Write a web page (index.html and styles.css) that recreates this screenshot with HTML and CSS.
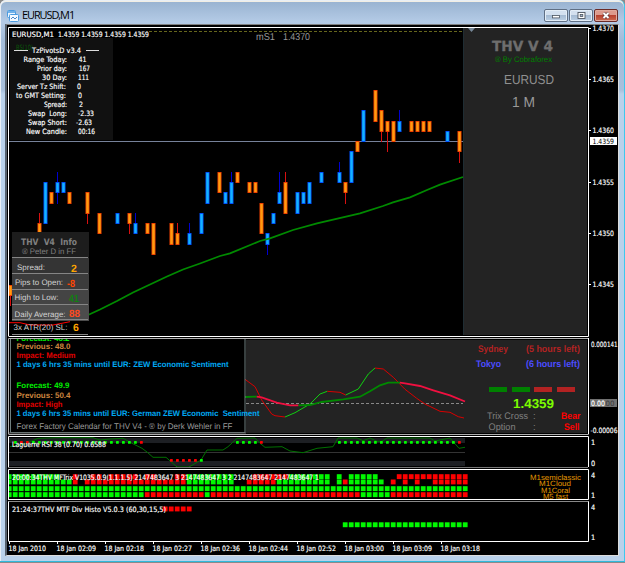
FILE: index.html
```html
<!DOCTYPE html>
<html lang="en">
<head>
  <meta charset="UTF-8">
  <title>EURUSD,M1</title>
  <link rel="stylesheet" href="styles.css">
</head>
<body>

<div class="window">
  <!-- TITLE BAR -->
  <div class="titlebar">
    <svg class="app-icon" width="12" height="12" viewBox="0 0 12 12">
      <rect x="0.5" y="0.5" width="8" height="7" rx="1" fill="#e8f4ff" stroke="#4a9be0"/>
      <path d="M1 2h7" stroke="#4a9be0" stroke-width="1.5"/>
      <rect x="2.5" y="4.5" width="9" height="7" rx="1" fill="#f4faff" stroke="#4a9be0"/>
      <path d="M4 9l2-2 2 2 2-2" fill="none" stroke="#4a86c8"/>
    </svg>
    <span class="title">EURUSD,M1</span>
    <div class="buttons">
      <button class="win-btn"><svg width="22" height="11" viewBox="0 0 22 11"><rect x="7.5" y="5.5" width="7" height="2.4" fill="#fff" stroke="#4d5560" stroke-width=".8"/></svg></button>
      <button class="win-btn"><svg width="22" height="11" viewBox="0 0 22 11"><rect x="8" y="2.5" width="7" height="6" fill="#fff" stroke="#4d5560" stroke-width=".9"/><rect x="10.2" y="4.5" width="2.6" height="2" fill="#9fb4cc" stroke="#4d5560" stroke-width=".8"/></svg></button>
      <button class="win-btn close"><svg width="22" height="11" viewBox="0 0 22 11"><path d="M8.5 3l5 5M13.5 3l-5 5" stroke="#5a3030" stroke-width="3.2"/><path d="M8.5 3l5 5M13.5 3l-5 5" stroke="#fff" stroke-width="2"/></svg></button>
    </div>
  </div>

  <div class="charts">
    <!-- PRICE CHART -->
    <svg class="panel" width="611" height="312" viewBox="7 25 611 312">
      <rect x="463" y="28" width="124" height="307" fill="#232323"/>
      <path d="M463.5 28V335" stroke="#1f2d33"/>
      <path d="M149 31.5H463" stroke="#66661c" stroke-dasharray="3 2"/>
      <path d="M9 141.5H463" stroke="#76829a"/>
      <path d="M468 28h7l-3.5 4z" fill="#778899"/>
      <g id="candles"></g>
      <polyline class="ma" points="88,315 100,309.5 117,301 133,292.5 150,284.5 167,276.5 183,269.5 200,263.5 220,256 230,253.3 260,241 270,238.3 293,230 317,223.3 360,213.3 383,206 393,202.3 410,197.3 427,190 440,184.7 463,177"/>
      <path d="M8.5 336V27.5H588.5V336.5H8.5" fill="none" stroke="#fff"/>

      <!-- pivots box -->
      <rect x="10" y="38" width="103" height="102" fill="#111"/>
      <text class="tahoma green-dim" x="16" y="49.5" textLength="17">BS(10)</text>
      <text class="tahoma" x="12" y="36.5" textLength="42">EURUSD,M1</text>
      <text class="tahoma" x="58" y="36.5" textLength="91">1.4359 1.4359 1.4359 1.4359</text>
      <path d="M14 50.5H28M86 50.5H99" stroke="#ddd"/>
      <text class="tahoma" x="32" y="53" textLength="49">TzPivotsD v3.4</text>
      <g id="pivots"></g>

      <!-- info box -->
      <path d="M9 322.7H20L30 325H53L70 321.7" fill="none" stroke="#f00"/>
      <rect x="12" y="232" width="77" height="26" fill="#1d1d1d"/>
      <rect x="12" y="258" width="77" height="16" fill="#343434"/>
      <rect x="12" y="274" width="77" height="16" fill="#3c3c3c"/>
      <rect x="12" y="290" width="77" height="15" fill="#444"/>
      <rect x="12" y="305" width="77" height="16" fill="#4c4c4c"/>
      <path d="M12 257.5H88M12 273.5H88M12 289.5H88M12 304.5H88M12 319.5H88M12 334.5H88" stroke="#858585"/>
      <g fill="#808080">
        <text class="dejavu" font-size="9" font-weight="bold" x="21" y="245" textLength="56">THV  V4  Info</text>
        <text class="arial" font-size="8" x="22" y="254" textLength="54">® Peter D in FF</text>
      </g>
      <g fill="#d3d3d3" class="arial" font-size="8">
        <text x="17" y="270" textLength="28">Spread:</text>
        <text x="15" y="285" textLength="48">Pips to Open:</text>
        <text x="14.5" y="300" textLength="44">High to Low:</text>
        <text x="14.5" y="316.5" textLength="51">Daily Average:</text>
        <text x="13.5" y="330" textLength="54">3x ATR(20) SL:</text>
      </g>
      <g class="arial" font-size="10.5" font-weight="bold">
        <text x="71" y="272" fill="#ffa500">2</text>
        <text x="67" y="287" fill="#ff4500" textLength="8">-8</text>
        <text x="69" y="302" fill="#108010" textLength="10">41</text>
        <text x="69" y="317" fill="#ff4a20" textLength="11">88</text>
        <text x="73" y="331" fill="#ffa500">6</text>
      </g>

      <text class="arial" font-size="10" fill="#999" x="256" y="40" textLength="19">mS1</text>
      <text class="arial" font-size="10" fill="#999" x="283" y="40" textLength="27">1.4370</text>
      <text class="dejavu" font-size="14" font-weight="bold" fill="#6e6e6e" stroke="#6e6e6e" stroke-width=".3" x="492" y="51" textLength="61">THV V 4</text>
      <text class="arial" font-size="8" fill="#008000" x="495" y="62" textLength="57">® By Cobraforex</text>
      <text class="arial" font-size="13" fill="#909090" x="504" y="84" textLength="50">EURUSD</text>
      <text class="arial" font-size="14.5" fill="#999" x="512" y="107" textLength="23">1 M</text>

      <g id="prices"></g>
    </svg>

    <!-- TRIX / CALENDAR -->
    <svg class="panel" width="611" height="98" viewBox="7 337 611 98">
      <rect x="246" y="340" width="341" height="93" fill="#232323"/>
      <path d="M246 403.5H463" stroke="#888" stroke-dasharray="3 2"/>
      <g fill="none">
        <path class="up" d="M285 417L295 412.7L310 404L320 394L327.3 391.3M345.7 395L358.3 389L368.3 374L375 368"/>
        <path class="down" d="M245 379.3L255 386.7L261.7 400L271.7 414L275 415.7L285 417M327.3 391.3L340 392.3L345.7 395M375 368L383.3 369L393.3 377.3L405 389.3L416.7 398.3L425 404L440 411.3L450 412.3L458.3 416.7L464 418"/>
        <path class="up thick" d="M245 397L256.7 396.7M298.3 405.3L310 405L321.7 402L343.3 399.3L360 396.7L370 391.3L380 385.3L388.3 382.7L400 382.7"/>
        <path class="down thick" d="M256.7 396.7L261.7 397.3L276.7 402.7L290 405.3L298.3 405.3M400 382.7L405 383.3L420 386L433.3 390.3L450 395.3L465 401.5"/>
      </g>
      <rect x="10.5" y="330" width="234.5" height="102.5" fill="#000" stroke="#708080"/>
      <path d="M9 433H246" stroke="#666"/>
      <g class="arial" font-size="8" font-weight="bold">
        <text x="16.5" y="340.5" fill="#0e0" textLength="53">Forecast: 46.2</text>
        <text x="16.5" y="349.3" fill="#cd853f" textLength="54">Previous: 48.0</text>
        <text x="16.5" y="358.3" fill="#e00000" textLength="59">Impact: Medium</text>
        <text x="16.5" y="367.3" fill="#00aaf5" textLength="212">1 days 6 hrs 35 mins until EUR: ZEW Economic Sentiment</text>
        <text x="16.5" y="388.3" fill="#0e0" textLength="53">Forecast: 49.9</text>
        <text x="16.5" y="397.5" fill="#cd853f" textLength="54">Previous: 50.4</text>
        <text x="16.5" y="406.5" fill="#e00000" textLength="46">Impact: High</text>
        <text x="16.5" y="415.5" fill="#00aaf5" textLength="243">1 days 6 hrs 35 mins until EUR: German ZEW Economic  Sentiment</text>
      </g>
      <text class="arial" font-size="8.3" fill="#9a9a9a" x="16.5" y="429" textLength="216">Forex Factory Calendar for THV V4 - ® by Derk Wehler in FF</text>
      <rect x="7" y="337" width="581" height="1.5" fill="#000"/>
      <path d="M8.5 434V338.5H588.5V434.5H8.5" fill="none" stroke="#b0b0b0"/>
      <path d="M588.5 338V434" stroke="#fff"/>

      <g class="arial" font-weight="bold" font-size="9.5">
        <text x="478" y="351.5" fill="#b22222" textLength="30">Sydney</text>
        <text x="526" y="351.5" fill="#b22222" textLength="54">(5 hours left)</text>
        <text x="476" y="366.7" fill="#4c4cff" textLength="25">Tokyo</text>
        <text x="526" y="366.7" fill="#4c4cff" textLength="54">(6 hours left)</text>
        <text x="513" y="407.5" fill="#7cfc00" font-size="13" textLength="41">1.4359</text>
        <text x="561" y="419.3" fill="#f00" textLength="19.5">Bear</text>
        <text x="564" y="430.3" fill="#f00" textLength="15.5">Sell</text>
      </g>
      <rect x="489" y="387" width="18" height="5" fill="#008000"/>
      <rect x="512" y="387" width="18" height="5" fill="#008000"/>
      <rect x="534" y="387" width="18" height="5" fill="#b22222"/>
      <rect x="557" y="387" width="18" height="5" fill="#b22222"/>
      <g class="arial" font-size="9.5" fill="#808080">
        <text x="487" y="419.3" textLength="41">Trix Cross</text>
        <text x="533" y="419.3">:</text>
        <text x="488.5" y="430.3" textLength="27">Option</text>
        <text x="533" y="430.3">:</text>
      </g>
      <text class="tahoma" x="591" y="346.5" textLength="26.5">0.000141</text>
      <rect x="590" y="399" width="27" height="8" fill="#707070"/>
      <text class="tahoma" x="591" y="406" textLength="14">0.00</text>
      <text class="tahoma dark" fill-opacity=".5" x="605.5" y="406" textLength="9">00</text>
      <text class="tahoma" x="590.5" y="432.5" textLength="27">-0.00006</text>
    </svg>

    <!-- LAGUERRE -->
    <svg class="panel" width="611" height="33" viewBox="7 435 611 33">
      <rect x="9" y="438" width="456" height="5" fill="#1d1f23"/>
      <rect x="9" y="461" width="456" height="5" fill="#1d1f23"/>
      <path d="M9 452.5H465" stroke="#333"/>
      <polyline fill="none" stroke="#007000" points="10,446.7 25,444 38,438.3 57,437.7 93,437.7 100,440 110,439 123,438.3 132,443.3 142,448.3 147,452 153,457.3 166,457.3 177,467 189,467 201,460 207,450 223,450 228,446.7 237,438.3 255,438 260,443.3 265,447.3 282,446.7 290,451 303,452.7 317,448.3 333,446.7 338,438 357,438 363,440.7 370,438 377,441.3 382,441.3 387,438 430,438 435,441 450,438 459,448.3 465,447.3"/>
      <g id="rsiDots"></g>
      <text class="tahoma" x="12" y="447" textLength="94">Laguerre RSI 38 (0.70) 0.6588</text>
      <path d="M8.5 467V436.5H588.5V467" fill="none" stroke="#fff"/>
      <path d="M8 467.5H588" stroke="#777"/>
      <text class="tahoma" x="591" y="445">1</text>
      <text class="tahoma" x="591" y="466">0</text>
    </svg>

    <!-- MTF TRIX -->
    <svg class="panel" width="611" height="32" viewBox="7 468 611 32">
      <g id="trixCells"></g>
      <text class="tahoma" x="12" y="480.3" textLength="307">20:00:34THV MFTrix V1035.0.9(1.1.1.5) 2147483647 3 2147483647 3 2 2147483647 2147483647 1</text>
      <path d="M8.5 500V469.5H588.5V499.5H8.5" fill="none" stroke="#fff"/>
      <g class="arial" font-size="7.5" fill="#e89a00">
        <text x="530" y="480" textLength="51">M1semiclassic</text>
        <text x="539" y="486.3" textLength="32">M1Cloud</text>
        <text x="541" y="492.7" textLength="29">M1Coral</text>
        <text x="543" y="498.8" textLength="25">M5 fast</text>
      </g>
      <text class="tahoma" x="591" y="478">4</text>
      <text class="tahoma" x="591" y="497.5">1</text>
    </svg>

    <!-- DIV HISTO -->
    <svg class="panel" width="611" height="42" viewBox="7 500 611 42">
      <g id="histoCells"></g>
      <text class="tahoma" x="12" y="511.7" textLength="154">21:24:37THV MTF Div Histo V5.0.3 (60,30,15,5)</text>
      <path d="M8.5 541V501.5H588.5V541.5H8.5" fill="none" stroke="#fff"/>
      <path d="M9 501.5H588" stroke="#888"/>
      <text class="tahoma" x="591" y="509.5">4</text>
      <text class="tahoma" x="591" y="539.5">1</text>
    </svg>

    <!-- TIME SCALE -->
    <svg class="panel" width="611" height="13" viewBox="7 542 611 13" id="timeAxis"></svg>
  </div>
</div>

<script src="script.js"></script>
</body>
</html>
```

FILE: styles.css
```css
body {
  margin: 0;
  background: #8a8a8a;
  overflow: hidden;
}

.window {
  box-sizing: border-box;
  width: 625px;
  height: 562px;
  padding-top: 2px;
  border-bottom: 1px solid #2fb9dc;
  border-right: 1px solid #3cc8ee;
  border-radius: 6px 6px 0 0;
  background: linear-gradient(#97b1cf, #b4cbe6 22px, #a3bcd9 40px, #a8c0dc 90px, #b9d1ea 94px);
  box-shadow: inset 1px 1px 0 #e9eff5, inset 0 2px 0 #f2eee4;
}

.titlebar {
  display: flex;
  align-items: center;
  height: 22px;
  padding: 0 6px 0 7px;
}

.app-icon {
  margin-top: 5px;
}

.title {
  margin: 4px 0 0 3px;
  font: 11px/16px "Open Sans", "Noto Sans", sans-serif;
  letter-spacing: -1.1px;
  color: #000;
}

.buttons {
  display: flex;
  gap: 1px;
  margin: 5px 0 0 auto;
}

.win-btn {
  box-sizing: border-box;
  width: 24px;
  height: 13px;
  padding: 0;
  border: 1px solid #5f6f84;
  border-radius: 2px;
  background: linear-gradient(#d3e0ef 45%, #a5bbd3 50%, #bcd0e5);
  box-shadow: inset 0 0 0 1px #e3edf7;
  line-height: 0;
}

.win-btn.close {
  border-color: #6a2b28;
  background: linear-gradient(#dd9a8d 45%, #b8412f 50%, #cc6a50);
  box-shadow: inset 0 0 0 1px #e0a99d;
}

.charts {
  display: flex;
  flex-direction: column;
  width: 611px;
  margin-left: 5px;
  border-top: 1px solid #808080;
  border-left: 2px solid #55606c;
  border-right: 1px solid #ddd;
  border-bottom: 1px solid #ddd;
  background: #000;
}

.panel {
  display: block;
  flex: none;
}

text {
  white-space: pre;
  text-rendering: geometricPrecision;
}

.tahoma {
  font-family: "DejaVu Sans Condensed", "DejaVu Sans", sans-serif;
  font-size: 7.3px;
  fill: #fff;
  stroke: #fff;
  stroke-width: 0.15px;
}

.tahoma.green-dim {
  fill: #0a5a0a;
  stroke: none;
}

.tahoma.dark {
  fill: #000;
  stroke: none;
}

.arial {
  font-family: "Liberation Sans", Arial, sans-serif;
}

.dejavu {
  font-family: "DejaVu Sans", sans-serif;
}

.ma {
  fill: none;
  stroke: #008a00;
  stroke-width: 1.8;
}

.up {
  stroke: #10d010;
}

.down {
  stroke: #d80000;
}

.up.thick {
  stroke: #008a00;
  stroke-width: 1.8;
}

.down.thick {
  stroke: #f01040;
  stroke-width: 1.8;
}
```

FILE: script.js
```js
const NS = "http://www.w3.org/2000/svg";

function add(parent, tag, attrs, text) {
  const el = document.createElementNS(NS, tag);
  for (const k in attrs) el.setAttribute(k, attrs[k]);
  if (text) el.textContent = text;
  parent.appendChild(el);
}

const byId = id => document.getElementById(id);

// x, direction, top, bottom, wick high, wick low (pips above 1.4340)
const candles = [
  [10, "d", 5, 4, 5, 3], [39, "d", 11, 9, 12, 9], [45, "u", 15, 11], [51, "d", 14, 13],
  [57, "u", 15, 14, 16, 13], [63, "u", 15, 14], [69, "d", 14, 13], [87, "d", 14, 12, 14, 11],
  [99, "d", 12, 10], [117, "u", 12, 11], [129, "d", 12, 11, 12, 10], [135, "u", 11, 10, 12, 10],
  [147, "d", 11, 10], [153, "d", 11, 8], [171, "d", 11, 9], [177, "d", 10, 9, 11, 9],
  [189, "u", 10, 9, 11, 9], [201, "u", 12, 10], [207, "u", 16, 13], [219, "d", 16, 14],
  [225, "u", 14, 13], [231, "u", 15, 13, 16, 13], [237, "d", 16, 15], [249, "d", 15, 14],
  [255, "d", 15, 14], [261, "d", 13, 10], [267, "u", 10, 9, 10, 8], [273, "u", 12, 11],
  [279, "u", 14, 13, 16, 13], [285, "d", 15, 12, 16, 12], [297, "u", 14, 12], [303, "u", 14, 13],
  [309, "u", 15, 13], [321, "u", 16, 15], [339, "u", 16, 15, 17, 15], [345, "d", 15, 14, 15, 13],
  [351, "u", 18, 15], [357, "d", 19, 18], [363, "u", 22, 19], [375, "d", 24, 21],
  [381, "d", 22, 20, 22, 19], [387, "d", 21, 20, 21, 18], [393, "d", 21, 19], [399, "u", 21, 20, 22, 20],
  [411, "d", 21, 20], [417, "d", 21, 20], [423, "d", 21, 20], [429, "d", 21, 20],
  [447, "u", 20, 19], [459, "d", 20, 18, 20, 17]
];
const py = p => Math.round(141 + (19 - p) * 10.25);

candles.forEach(([x, dir, top, bottom, high = top, low = bottom]) => {
  const g = byId("candles");
  const up = dir === "u";
  const h = py(bottom) - py(top) + 1;
  add(g, "rect", { x: x, y: py(high), width: 1, height: py(low) - py(high) + 1, fill: up ? "#0000d0" : "#d81010" });
  add(g, "rect", { x: x - 1.5, y: py(top), width: 4, height: h, fill: up ? "#0050ff" : "#f04000" });
  add(g, "rect", { x: x - 0.7, y: py(top) + 1, width: 2.4, height: h - 2, fill: up ? "#14b4ff" : "#ff9c10" });
});

// pivots table: label, label start, label end, value, value start, value end
[
  ["Range Today:", 23.5, 67, "41", 78.5, 86.5], ["Prior day:", 37, 67, "167", 79, 90],
  ["30 Day:", 42, 67, "111", 78, 89], ["Server Tz Shift:", 17, 66, "0", 77, 81],
  ["to GMT Setting:", 16, 66, "0", 78, 82], ["Spread:", 44, 67, "2", 79, 83],
  ["Swap  Long:", 28, 67, "-2.33", 78, 94], ["Swap Short:", 28, 67, "-2.63", 76, 92],
  ["New Candle:", 26, 67, "00:16", 78, 95]
].forEach(([label, x1, x2, value, v1, v2], i) => {
  const y = 62 + i * 9;
  add(byId("pivots"), "text", { class: "tahoma", x: x1, y, textLength: x2 - x1 }, label);
  add(byId("pivots"), "text", { class: "tahoma", x: v1, y, textLength: v2 - v1 }, value);
});

// price scale
[["1.4370", 28], ["1.4365", 79], ["1.4360", 130], ["1.4355", 182], ["1.4350", 233], ["1.4345", 284]].forEach(([p, y]) => {
  add(byId("prices"), "rect", { x: 589, y, width: 2, height: 1, fill: "#fff" });
  add(byId("prices"), "text", { class: "tahoma", x: 592.5, y: y + 3, textLength: 21.5 }, p);
});
add(byId("prices"), "rect", { x: 590, y: 137, width: 27, height: 8, fill: "#fff" });
add(byId("prices"), "text", { class: "tahoma dark", x: 592.5, y: 144, textLength: 21.5 }, "1.4359");

// Laguerre signal dots
function dots(from, to, y, color) {
  for (let x = from; x <= to; x += 6) {
    add(byId("rsiDots"), "rect", { x: x - 1, y: y - 1, width: 2.8, height: 2.8, rx: 0.6, fill: color });
  }
}
dots(15, 15, 442, "#0f0");
dots(21, 27, 442, "#f00");
dots(33, 135, 442, "#0f0");
dots(141, 141, 442, "#f00");
dots(171, 195, 460, "#f00");
dots(201, 201, 460, "#0f0");
dots(237, 255, 442, "#0f0");
dots(261, 261, 442, "#f00");
dots(339, 453, 442, "#0f0");
dots(459, 459, 442, "#f00");

// run-length rows: G green, R red, N empty
function cells(id, y, runs) {
  let i = 0;
  runs.match(/[GRN]\d+/g).forEach(run => {
    for (let n = +run.slice(1); n > 0; n--, i++) {
      if (run[0] === "N") continue;
      const x = Math.max(9, 6 * i + 6.8);
      add(byId(id), "rect", { x, y, width: 6 * i + 11.6 - x, height: 4.9, fill: run[0] === "G" ? "#00f800" : "#ff0000" });
    }
  });
}
cells("trixCells", 474.2, "G9N2R1N2R2N1R5N1R2N3R2G8N3R6G7N1G1N1G5N3R12");
cells("trixCells", 479.5, "G11R1N1R17G8N2R5G9N1G1R1G6N1R1N1R1N1R1N2R6");
cells("trixCells", 486.2, "G77");
cells("trixCells", 492.2, "G23R10G1R25G5R13");
cells("histoCells", 506.5, "N26R5");
cells("histoCells", 522.3, "N56G21");

// time scale
["2010", "02:09", "02:18", "02:27", "02:36", "02:44", "02:52", "03:00", "03:09", "03:18"].forEach((t, i) => {
  add(byId("timeAxis"), "rect", { x: 9 + i * 48, y: 542, width: 1, height: 2, fill: "#fff" });
  add(byId("timeAxis"), "text", { class: "tahoma", x: 8.5 + i * 48, y: 551, textLength: i ? 39.5 : 37.5 }, "18 Jan " + t);
});

// fit glyphs, not only the gaps between them
document.querySelectorAll("text[textLength]").forEach(t => t.setAttribute("lengthAdjust", "spacingAndGlyphs"));
```
